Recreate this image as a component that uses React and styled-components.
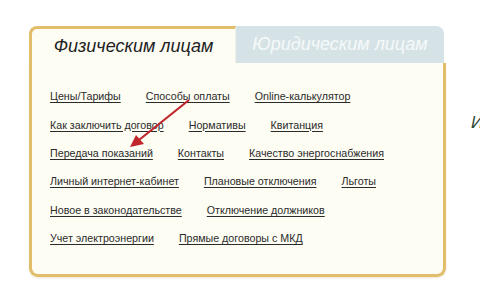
import React from "react";
import styled, { createGlobalStyle } from "styled-components";

const GlobalStyle = createGlobalStyle`
  html, body {
    margin: 0;
    padding: 0;
    background: #ffffff;
    overflow: hidden;
  }
  body {
    font-family: "Liberation Sans", Arial, sans-serif;
  }
`;

const rows = [
  ["Цены/Тарифы", "Способы оплаты", "Online-калькулятор"],
  ["Как заключить договор", "Нормативы", "Квитанция"],
  ["Передача показаний", "Контакты", "Качество энергоснабжения"],
  ["Личный интернет-кабинет", "Плановые отключения", "Льготы"],
  ["Новое в законодательстве", "Отключение должников"],
  ["Учет электроэнергии", "Прямые договоры с МКД"],
];

const App = () => {
  return (
    <Page>
      <GlobalStyle />
      <Card>
        <TabRow>
          <Tab active>Физическим лицам</Tab>
          <Tab>Юридическим лицам</Tab>
        </TabRow>
        <Body>
          {rows.map((row, i) => (
            <LinkRow key={i}>
              {row.map((label) => (
                <Link key={label} href="#">
                  {label}
                </Link>
              ))}
            </LinkRow>
          ))}
        </Body>
        <Arrow width="70" height="55" viewBox="0 0 70 55">
          <line x1="62" y1="1" x2="12" y2="41" stroke="#c0272d" strokeWidth="2.2" />
          <polygon points="3,48 9,36 17,45" fill="#c0272d" />
        </Arrow>
      </Card>
      <SideTitle>Информация</SideTitle>
    </Page>
  );
};

const Page = styled.div`
  display: flex;
  align-items: flex-start;
  padding: 26px 0 0 29px;
  width: 480px;
  height: 295px;
  box-sizing: border-box;
  overflow: hidden;
`;

const Card = styled.div`
  position: relative;
  flex: 0 0 417px;
  width: 417px;
`;

const TabRow = styled.div`
  display: flex;
  height: 37px;
`;

const Tab = styled.div`
  box-sizing: border-box;
  display: flex;
  align-items: center;
  justify-content: center;
  font-style: italic;
  font-size: 18px;
  padding-top: ${(p) => (p.active ? "1px" : "0")};
  width: ${(p) => (p.active ? "207px" : "auto")};
  flex: ${(p) => (p.active ? "0 0 207px" : "1")};
  color: ${(p) => (p.active ? "#222222" : "#f6f9fa")};
  background: ${(p) => (p.active ? "#fdfdf4" : "#d5e3e6")};
  border-top: ${(p) => (p.active ? "3px solid #e2bd6a" : "none")};
  border-left: ${(p) => (p.active ? "3px solid #e2bd6a" : "none")};
  border-right: ${(p) => (p.active ? "1px solid #eef1ea" : "none")};
  border-radius: ${(p) => (p.active ? "8px 0 0 0" : "0 8px 0 0")};
  margin-right: ${(p) => (p.active ? "0" : "2px")};
`;

const Body = styled.div`
  box-sizing: border-box;
  height: 214px;
  padding: 19px 18px 0 18px;
  background: #fdfdf4;
  border: 3px solid #e2bd6a;
  border-top: none;
  border-radius: 0 0 9px 9px;
  box-shadow: 0 1px 2px rgba(180, 150, 80, 0.25);
`;

const LinkRow = styled.div`
  display: flex;
  gap: 25px;
  height: 28.4px;
  align-items: center;
`;

const Link = styled.a`
  font-size: 10.7px;
  color: #2b2b2b;
  text-decoration: underline;
  text-underline-offset: 2px;
  white-space: nowrap;
`;

const Arrow = styled.svg`
  position: absolute;
  left: 98px;
  top: 73px;
`;

const SideTitle = styled.div`
  margin: 87px 0 0 25px;
  font-size: 17px;
  font-style: italic;
  color: #2a4536;
  white-space: nowrap;
`;

export default App;
